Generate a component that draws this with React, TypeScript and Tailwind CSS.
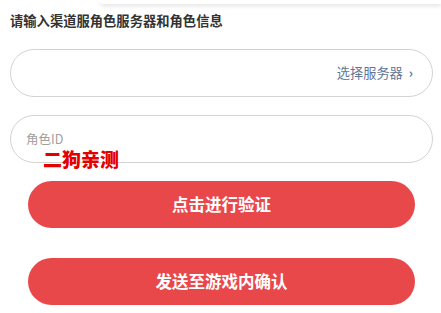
import React from 'react';

const font = { fontFamily: '"Noto Sans CJK SC", "Noto Sans", sans-serif' };

export default function App() {
  return (
    <div className="relative w-[441px] h-[313px] overflow-hidden bg-white" style={font}>
      {/* bottom edge of the card above */}
      <div className="h-[4px] ml-[100px] bg-white rounded-bl-[6px] shadow-[0_2px_4px_rgba(0,0,0,0.12)]" />

      <div className="pl-[10px] pr-[8px] pt-[7px]">
        <h2 className="text-[13.3px] leading-[20px] font-bold text-[#333333]">请输入渠道服角色服务器和角色信息</h2>

        <div className="mt-[18px] h-[48px] rounded-full border border-[#d3d3d3] flex items-center justify-end pr-[19px]">
          <span className="text-[13.2px] text-[#5f7597]">选择服务器</span>
          <span className="ml-[6px] text-[13px] text-[#5f7597] font-bold">›</span>
        </div>

        <div className="relative mt-[18px] h-[48px] rounded-full border border-[#d3d3d3] flex items-center pl-[15px]">
          <span className="text-[12.5px] text-[#a0a0a0]">角色ID</span>
          <span className="absolute left-[32px] top-[33px] text-[19px] leading-[19px] font-black text-[#e30000]">二狗亲测</span>
        </div>

        <div className="pl-[18px] pr-[18px]">
          <button className="mt-[18px] w-full h-[47px] rounded-full bg-[#e9484b] text-white text-[16.5px] font-bold">
            点击进行验证
          </button>
          <button className="mt-[30px] w-full h-[47px] rounded-full bg-[#e9484b] text-white text-[16.5px] font-bold">
            发送至游戏内确认
          </button>
        </div>
      </div>
    </div>
  );
}
